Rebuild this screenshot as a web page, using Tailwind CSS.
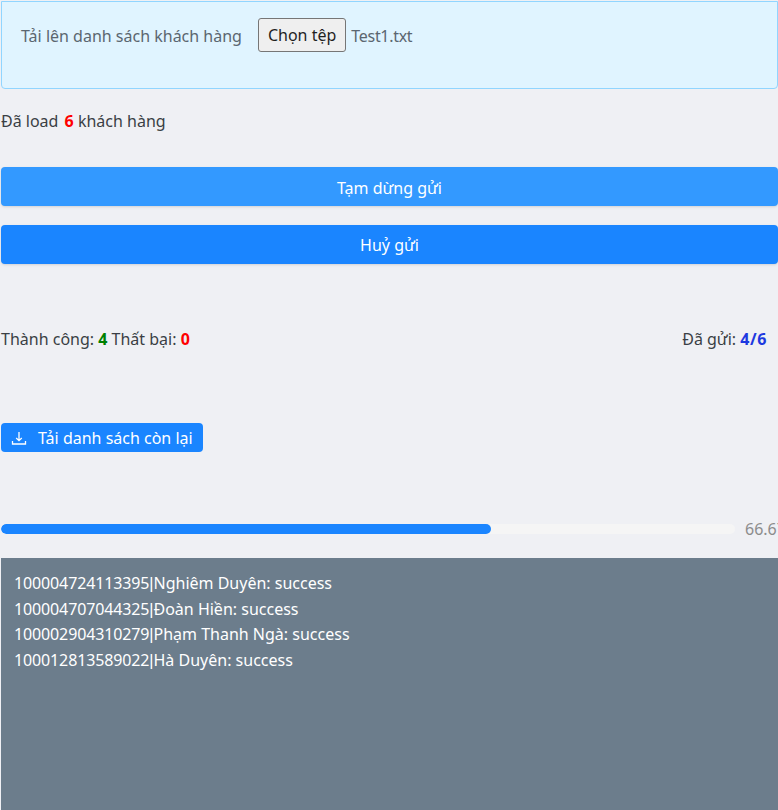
<!DOCTYPE html>
<html lang="vi">
<head>
    <meta charset="UTF-8">
    <title>Gửi tin</title>
    <script src="https://cdn.jsdelivr.net/npm/@tailwindcss/browser@4"></script>
</head>
<body class="bg-[#eff0f4] font-['Noto_Sans',sans-serif] text-[16px] text-[#3a3f44] h-[810px] overflow-hidden">
    <div class="pl-px">
        <div class="mt-px h-[88px] bg-[#e0f4ff] border border-[#91d5ff] rounded-b-[4px] pl-[19px] pt-[16px] flex items-start">
            <span class="mt-[6px] mr-[16px] text-[#5b6670]">Tải lên danh sách khách hàng</span>
            <button class="h-[34px] px-[9px] bg-[#efefef] border border-[#767676] rounded-[3px] text-[#1f1f1f]">Chọn tệp</button>
            <span class="ml-[5px] mt-[6px] text-[#5b6670] tracking-[-0.3px]">Test1.txt</span>
        </div>

        <p class="mt-[21px] h-[22px] leading-[22px]">Đã load <b class="ml-[2px] text-[#ff0000]">6</b> khách hàng</p>

        <button class="block w-full h-[39px] mt-[35px] pt-[2px] bg-[#3399ff] rounded-[4px] text-white shadow-sm">Tạm dừng gửi</button>
        <button class="block w-full h-[39px] mt-[19px] bg-[#1a85ff] rounded-[4px] text-white shadow-sm">Huỷ gửi</button>

        <div class="flex justify-between mt-[64px] pr-[11px] h-[22px] leading-[22px]">
            <p>Thành công: <b class="text-[#008000]">4</b> Thất bại: <b class="text-[#ff0000]">0</b></p>
            <p>Đã gửi: <b class="text-[#1d39e0] tracking-[0.6px]">4/6</b></p>
        </div>

        <button class="flex items-center gap-[11px] h-[29px] mt-[73px] pl-[10px] pr-[10px] bg-[#1a85ff] rounded-[4px] text-white">
            <svg class="w-[16px] h-[16px]" viewBox="0 0 16 16" fill="none" stroke="currentColor" stroke-width="1.3">
                <path d="M8 2v8.5M5.2 8 8 10.7 10.8 8M1.5 11v3h13v-3"/>
            </svg>
            <span>Tải danh sách còn lại</span>
        </button>

        <div class="flex items-center mt-[66px] h-[22px]">
            <div class="w-[734px] h-[10px] shrink-0 rounded-full bg-[#f5f5f5] overflow-hidden">
                <div class="h-full bg-[#1a85ff] rounded-full" style="width: 66.7%"></div>
            </div>
            <span class="ml-[10px] text-[#8c8c8c] whitespace-nowrap">66.67</span>
        </div>

        <div class="mt-[18px] h-[252px] bg-[#6c7d8c] text-white pl-[13px] pt-[13px] leading-[25.5px]">
            <div><span class="tracking-[-0.13px]">100004724113395</span><span class="font-['Liberation_Sans']">|</span>Nghiêm Duyên: success</div>
            <div><span class="tracking-[-0.13px]">100004707044325</span><span class="font-['Liberation_Sans']">|</span>Đoàn Hiền: success</div>
            <div><span class="tracking-[-0.13px]">100002904310279</span><span class="font-['Liberation_Sans']">|</span>Phạm Thanh Ngà: success</div>
            <div><span class="tracking-[-0.13px]">100012813589022</span><span class="font-['Liberation_Sans']">|</span>Hà Duyên: success</div>
        </div>
    </div>
</body>
</html>
